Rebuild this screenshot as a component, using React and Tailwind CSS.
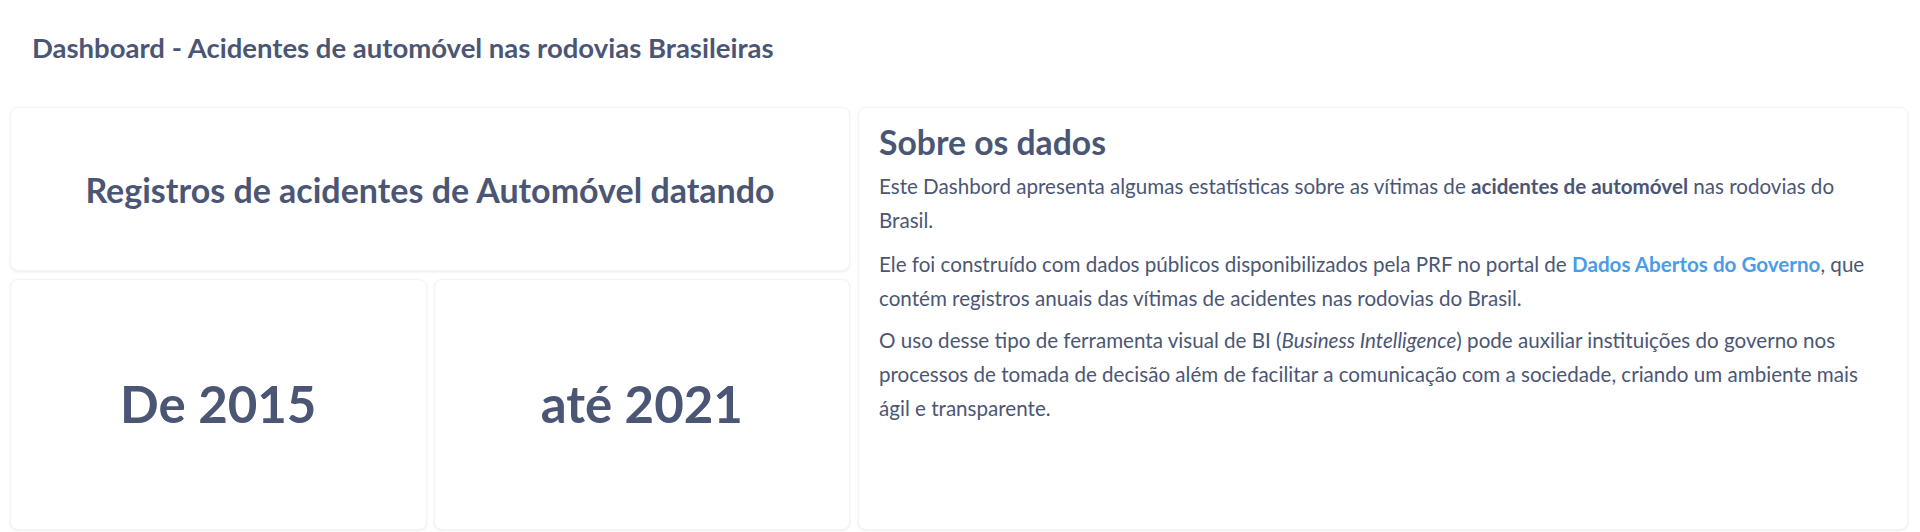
import React from 'react'

export default function App() {
    return (
        <div className="w-[1920px] h-[532px] bg-white overflow-hidden font-['Lato','Liberation_Sans',sans-serif] text-[#4b5675]">
            {/* Title */}
            <h1 className="pl-8 pt-[32px] h-[107px] text-[27.5px] leading-[32px] font-bold">
                Dashboard - Acidentes de automóvel nas rodovias Brasileiras
            </h1>

            <div className="grid grid-cols-[840px_1050px] gap-2 pl-[10px]">
                {/* Left column */}
                <div className="flex flex-col gap-2">
                    <div className="h-[164px] bg-white rounded-lg shadow-[0_1px_3px_rgba(0,0,0,0.08)] border border-gray-100 flex items-center justify-center">
                        <h2 className="text-[34px] font-bold">Registros de acidentes de Automóvel datando</h2>
                    </div>
                    <div className="grid grid-cols-2 gap-[7px] h-[251px]">
                        <div className="bg-white rounded-lg shadow-[0_1px_3px_rgba(0,0,0,0.08)] border border-gray-100 flex items-center justify-center">
                            <span className="text-[51px] font-bold">De 2015</span>
                        </div>
                        <div className="bg-white rounded-lg shadow-[0_1px_3px_rgba(0,0,0,0.08)] border border-gray-100 flex items-center justify-center">
                            <span className="text-[51px] font-bold">até 2021</span>
                        </div>
                    </div>
                </div>

                {/* Right column */}
                <div className="h-[423px] bg-white rounded-lg shadow-[0_1px_3px_rgba(0,0,0,0.08)] border border-gray-100 pl-5 pr-5 pt-[13px]">
                    <h2 className="text-[33.7px] font-bold leading-[42px] mb-[6px]">Sobre os dados</h2>
                    <div className="text-[20.6px] leading-[34px]">
                        <p className="mb-[10px]">
                            Este Dashbord apresenta algumas estatísticas sobre as vítimas de <b>acidentes de automóvel</b> nas rodovias do Brasil.
                        </p>
                        <p className="mb-[8px]">
                            Ele foi construído com dados públicos disponibilizados pela PRF no portal de{' '}
                            <a href="#" className="text-[#4a9ce8] font-bold">Dados Abertos do Governo</a>, que contém registros anuais das vítimas de acidentes nas rodovias do Brasil.
                        </p>
                        <p>
                            O uso desse tipo de ferramenta visual de BI (<i>Business Intelligence</i>) pode auxiliar instituições do governo nos processos de tomada de decisão além de facilitar a comunicação com a sociedade, criando um ambiente mais ágil e transparente.
                        </p>
                    </div>
                </div>
            </div>
        </div>
    )
}
